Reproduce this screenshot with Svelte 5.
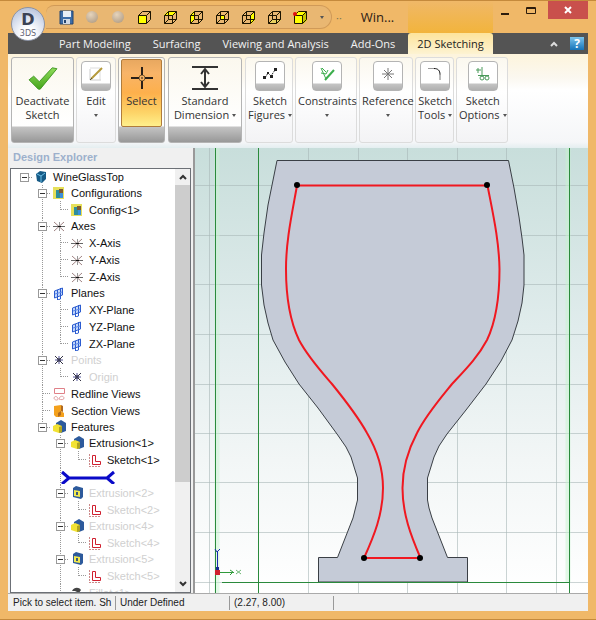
<script lang="ts">
	type Node = {
		label: string;
		icon: string;
		muted?: boolean;
		children?: Node[];
	};

	const views = ['front', 'top', 'left', 'back', 'right', 'bottom', 'iso'];
	const tabs = ['Part Modeling', 'Surfacing', 'Viewing and Analysis', 'Add-Ons', '2D Sketching'];

	const groups = [
		{ id: 'deactivate', lines: ['Deactivate', 'Sketch'], large: true, width: 63 },
		{ id: 'edit', lines: ['Edit'], menu: true, width: 40 },
		{ id: 'select', lines: ['Select'], large: true, width: 47 },
		{ id: 'dimension', lines: ['Standard', 'Dimension'], large: true, menu: true, width: 74 },
		{ id: 'figures', lines: ['Sketch', 'Figures'], menu: true, width: 48 },
		{ id: 'constraints', lines: ['Constraints'], menu: true, width: 62 },
		{ id: 'reference', lines: ['Reference'], menu: true, width: 54 },
		{ id: 'tools', lines: ['Sketch', 'Tools'], menu: true, width: 39 },
		{ id: 'options', lines: ['Sketch', 'Options'], menu: true, width: 52 }
	];

	const extrusion = (n: number, icon: string, muted = true): Node => ({
		label: `Extrusion<${n}>`,
		icon,
		muted,
		children: [{ label: `Sketch<${n}>`, icon: 'sketch', muted }]
	});

	const root: Node = {
		label: 'WineGlassTop',
		icon: 'part',
		children: [
			{ label: 'Configurations', icon: 'config', children: [{ label: 'Config<1>', icon: 'config' }] },
			{
				label: 'Axes',
				icon: 'axis',
				children: ['X-Axis', 'Y-Axis', 'Z-Axis'].map((label) => ({ label, icon: 'axis' }))
			},
			{
				label: 'Planes',
				icon: 'plane',
				children: ['XY-Plane', 'YZ-Plane', 'ZX-Plane'].map((label) => ({ label, icon: 'plane' }))
			},
			{
				label: 'Points',
				icon: 'point',
				muted: true,
				children: [{ label: 'Origin', icon: 'point', muted: true }]
			},
			{ label: 'Redline Views', icon: 'redline' },
			{ label: 'Section Views', icon: 'section' },
			{
				label: 'Features',
				icon: 'boss',
				children: [
					extrusion(1, 'boss', false),
					{ label: '', icon: 'rollback' },
					extrusion(2, 'cut'),
					extrusion(4, 'boss'),
					extrusion(5, 'cut'),
					{ label: 'Fillet<1>', icon: 'fillet', muted: true }
				]
			}
		]
	};

	const gridX = [209, 308, 358, 407, 457, 506, 556];
	const gridY = [185, 235, 284, 334, 384, 433, 482, 532, 582];
	const handles = [
		[297, 185],
		[487, 185],
		[364, 558],
		[420, 558]
	];

	let activeTab = $state('2D Sketching');
	let activeTool = $state('select');
	let closed: Record<string, boolean> = $state({});
</script>

{#snippet cube(face: string)}
	<svg class="cube" viewBox="0 0 15 15" aria-hidden="true">
		{#if face === 'iso'}
			<path d="M1 5 5 1h9v9l-4 4H1z" fill="#ff0" />
			<path d="M10 5l4-4v9l-4 4z" fill="#c8c800" />
			<path d="M1.5 5.5h8v8h-8zM1.5 5.5l4-4h8l-4 4M13.5 1.5v8l-4 4" />
			<circle cx="2" cy="4" r="2" fill="#e01010" />
		{:else}
			{#if face === 'front'}<path d="M1 5h9v9H1z" fill="#ff0" />{/if}
			{#if face === 'back'}<path d="M5 5h5v5H5z" fill="#ff0" />{/if}
			{#if face === 'left'}<path d="M1 5l4-4v9l-4 4z" fill="#ff0" />{/if}
			{#if face === 'right'}<path d="M10 5l4-4v9l-4 4z" fill="#ff0" />{/if}
			{#if face === 'top'}<path d="M1 5l4-4h9l-4 4z" fill="#ff0" />{/if}
			{#if face === 'bottom'}<path d="M1 14l4-4h9l-4 4z" fill="#e8d060" />{/if}
			<path d="M1.5 5.5h8v8h-8zM1.5 5.5l4-4h8l-4 4M13.5 1.5v8l-4 4" />
			{#if face !== 'front'}<path d="M5.5 1.5v8h8M5.5 9.5l-4 4" />{/if}
		{/if}
	</svg>
{/snippet}

{#snippet toolIcon(id: string)}
	{#if id === 'deactivate'}
		<svg viewBox="0 0 32 28" width="30" height="26" aria-hidden="true">
			<defs>
				<linearGradient id="tick" x1="0" y1="0" x2="0" y2="1">
					<stop offset="0" stop-color="#8fdc5a" />
					<stop offset="1" stop-color="#45a51c" />
				</linearGradient>
			</defs>
			<path d="M1 16l5-4 6 6L26 3l5 1-18 22h-2z" fill="url(#tick)" stroke="#3d9420" />
		</svg>
	{:else if id === 'select'}
		<svg viewBox="0 0 24 24" width="24" height="24" aria-hidden="true">
			<circle cx="12" cy="12" r="3" fill="none" stroke="#7a5a30" />
			<path d="M12 1v8M12 15v8M1 12h8M15 12h8" stroke="#2a2018" stroke-width="2" />
			<path d="M11 12h2" stroke="#2a2018" />
		</svg>
	{:else if id === 'dimension'}
		<svg viewBox="0 0 26 26" width="26" height="26" fill="none" stroke="#333" aria-hidden="true">
			<path d="M0 2h26M0 24h26" stroke-width="2" />
			<path d="M13 4v18M9 9l4-5 4 5M9 17l4 5 4-5" stroke-width="2" />
		</svg>
	{:else if id === 'edit'}
		<svg viewBox="0 0 16 16" width="16" height="16" fill="none" aria-hidden="true">
			<path d="M2 3v11h11" stroke="#ccc" />
			<path d="M2 2h10v12" stroke="#dcdcdc" />
			<path d="M3 13 14 2" stroke="#b59a3c" stroke-width="2" />
			<path d="M2 14l2-2" stroke="#554" />
		</svg>
	{:else if id === 'figures'}
		<svg viewBox="0 0 16 16" width="16" height="16" fill="#222" aria-hidden="true">
			<path d="M3 12l3-5 3 3 4-6" fill="none" stroke="#222" stroke-dasharray="2 1" />
			<path d="M1 10h3v3H1zM5 6h2v2H5zM8 9h3v3H8zM12 2h3v3h-3z" />
		</svg>
	{:else if id === 'constraints'}
		<svg viewBox="0 0 16 16" width="16" height="16" fill="none" stroke="#3cae4c" aria-hidden="true">
			<path d="M2 2l5 11M2 7l5 1 2-4M3 2l4 4" />
			<path d="M6 14 15 4" stroke-width="2" />
		</svg>
	{:else if id === 'reference'}
		<svg viewBox="0 0 16 16" width="16" height="16" fill="none" stroke="#777" aria-hidden="true">
			<path d="M8 2v12M2 8h12M4 4l8 8M12 4l-8 8" />
		</svg>
	{:else if id === 'tools'}
		<svg viewBox="0 0 16 16" width="16" height="16" fill="none" aria-hidden="true">
			<path d="M1 2.500h6" stroke="#999" />
			<path d="M7 2.500c4 0 6 2 6 6" stroke="#111" />
			<path d="M13 8v6" stroke="#777" />
		</svg>
	{:else}
		<svg viewBox="0 0 16 16" width="16" height="16" fill="none" stroke="#4a9a5a" aria-hidden="true">
			<path d="M1 4h5M3 2v5M7 1v10M3 9.500h11" />
			<circle cx="7" cy="12" r="2" />
			<circle cx="12" cy="12" r="2" />
		</svg>
	{/if}
{/snippet}

{#snippet treeIcon(icon: string)}
	<svg class="node-icon" viewBox="0 0 14 14" fill="none" aria-hidden="true">
		{#if icon === 'part'}
			<path d="M2 4l4-3 6 1v7l-4 4-5-2z" fill="#155a86" />
			<path d="M3 4l4 2v6M7 6l4-3" stroke="#6cc0e8" />
		{:else if icon === 'config'}
			<path d="M1 1h11v12H1z" fill="#e6e05a" />
			<path d="M4 4h4v8H4z" fill="#2f8d9c" />
			<path d="M7 3h4v4H7z" fill="#7d5a32" />
			<path d="M8 7h3v5H8z" fill="#3a8fdc" />
		{:else if icon === 'axis'}
			<path d="M2 3l10 9M2 12l10-9" stroke="#a08484" />
			<path d="M1 7.500h12" stroke="#666" />
			<path d="M7.500 3v9" stroke="#999" />
			<path d="M6 7h3v1H6z" fill="#111" />
		{:else if icon === 'plane'}
			<path d="M2.500 5l8-3v7l-8 3z" fill="#c4d8fa" stroke="#2b5cd0" />
			<path d="M5.500 4v10l3-1V2" stroke="#2b5cd0" />
			<path d="M3 8l7-2" stroke="#5a86e8" />
		{:else if icon === 'point'}
			<path d="M3 3l8 8M11 3l-8 8" stroke="#334" />
			<path d="M7 3v8M3 7h8" stroke="#559" />
			<path d="M5 5h4v4H5z" fill="#334" fill-opacity="0.6" />
		{:else if icon === 'redline'}
			<path d="M2.500 1.500h10v5h-10z" stroke="#e08088" />
			<path d="M2 11c1-3 4-1 4 1s-4 1-4-1zM7 12c1-4 5-3 5-1s-3 2-5 1z" stroke="#e0a0a4" />
		{:else if icon === 'section'}
			<path d="M2 2l7-1v6l3 2v4H4l-2-2z" fill="#f4a11c" />
			<path d="M9 1l2 1v6l-2-1zM6 9l3-2v4l-3 2z" fill="#b06a20" />
		{:else if icon === 'boss'}
			<path d="M4 3l5-3 5 3v8l-5 2-5-3z" fill="#2d5a9c" />
			<path d="M1 6l4-2 5 2v6l-3 1-6-2z" fill="#f2e233" />
			<path d="M7 7l3-1v6l-3 1z" fill="#b0a420" />
		{:else if icon === 'cut'}
			<path d="M3 2l3-2 7 2v9l-2 2-8-2z" fill="#2d5a9c" />
			<path d="M4 4l6 1v6l-6-1z" fill="#f2e94e" />
			<path d="M6 6h2v3H6z" fill="#3a5a78" />
		{:else if icon === 'sketch'}
			<path d="M1.500 1v12M1 13.500h12" stroke="#c88" stroke-dasharray="2 1" />
			<path d="M4.500 2.500h3v6h5v3h-8z" stroke="#d02030" />
		{:else}
			<path d="M2 5c2-4 7-4 9-1l-2 3-4-2z" fill="#444" />
		{/if}
	</svg>
{/snippet}

{#snippet branch(node: Node)}
	<li>
		{#if node.icon === 'rollback'}
			<div class="row">
				<svg class="rollback" viewBox="0 0 54 14" fill="none" stroke="#0a0ac8" aria-hidden="true">
					<path d="M8 8h38M1 2l7 6-7 6M53 2l-7 6 7 6" stroke-width="3" />
				</svg>
			</div>
		{:else}
			<div class="row" class:muted={node.muted} class:parent={node.children}>
				<span class="branch-slot">
					{#if node.children}
						<button
							class="toggle"
							aria-label={`Toggle ${node.label}`}
							onclick={() => (closed[node.label] = !closed[node.label])}
							><svg viewBox="0 0 7 7" stroke="#333"
								><path d={closed[node.label] ? 'M1 3.500h5M3.500 1v5' : 'M1 3.500h5'} /></svg
							></button
						>
					{/if}
				</span>
				{@render treeIcon(node.icon)}
				<span class="label">{node.label}</span>
			</div>
			{#if node.children && !closed[node.label]}
				<ul>
					{#each node.children as child}
						{@render branch(child)}
					{/each}
				</ul>
			{/if}
		{/if}
	</li>
{/snippet}

<div class="window">
	<header class="titlebar">
		<button class="orb" aria-label="Application menu">
			<b>D</b>
			<small>3DS</small>
		</button>
		<div class="quick">
			<button aria-label="Save">
				<svg viewBox="0 0 15 15" width="15" height="15" aria-hidden="true">
					<path d="M1 1h13v13H1z" fill="#3d6da8" stroke="#25456f" />
					<path d="M4 1h8v6H4z" fill="#e8eef6" />
					<path d="M4 9h7v5H4z" fill="#cfd8e4" />
					<path d="M5 10h2v3H5z" fill="#25456f" />
				</svg>
			</button>
			<button aria-label="Undo"><span class="ball"></span></button>
			<button aria-label="Redo"><span class="ball"></span></button>
			{#each views as view}
				<button aria-label={`${view} view`}>{@render cube(view)}</button>
			{/each}
			<button class="more" aria-label="More views"><span class="caret"></span></button>
		</div>
		<span class="dots">··</span>
		<h1>Win...</h1>
		<div class="controls">
			<button aria-label="Minimize"><svg viewBox="0 0 12 12" width="12" height="12"><path d="M2 9h8v2H2z" fill="#2c1c0c" /></svg></button>
			<button aria-label="Maximize"
				><svg viewBox="0 0 12 12" width="12" height="12" fill="none" stroke="#2c1c0c"><path d="M1.500 3.500h9v6h-9zM1 4.500h10" /></svg></button
			>
			<button class="close" aria-label="Close"
				><svg viewBox="0 0 12 12" width="12" height="12" stroke="#fff" stroke-width="2"><path d="M3 3l6 6M9 3l-6 6" /></svg></button
			>
		</div>
	</header>

	<nav class="tabs">
		{#each tabs as tab}
			<button class:active={activeTab === tab} onclick={() => (activeTab = tab)}>{tab}</button>
		{/each}
		<span class="spacer"></span>
		<button class="collapse" aria-label="Collapse ribbon"
			><svg viewBox="0 0 8 6" width="8" height="6" fill="none" stroke="#ddd" stroke-width="2"><path d="M1 5l3-3 3 3" /></svg></button
		>
		<button class="help" aria-label="Help">?</button>
	</nav>

	<div class="ribbon">
		{#each groups as group}
			<button
				class="group"
				class:large={group.large}
				class:pressed={activeTool === group.id && group.large}
				style:width={`${group.width}px`}
				onclick={() => (activeTool = group.id)}
			>
				<span class="face">
					<span class="glyph">{@render toolIcon(group.id)}</span>
					<span class="caption">
						{#each group.lines as line, i}
							<span class="line"
								>{line}{#if group.menu && i === 1}<i class="caret"></i>{/if}</span
							>
						{/each}
						{#if group.menu && group.lines.length === 1}<span class="line"><i class="caret"></i></span>{/if}
					</span>
				</span>
			</button>
		{/each}
	</div>

	<main>
		<aside>
			<h2>Design Explorer</h2>
			<div class="panel">
				<ul class="tree">
					{@render branch(root)}
				</ul>
				<div class="scrollbar">
					<button aria-label="Scroll up"
						><svg viewBox="0 0 8 6" width="8" height="6" fill="none" stroke="#333" stroke-width="2"><path d="M1 5l3-3 3 3" /></svg></button
					>
					<div class="track"><div class="thumb"></div></div>
					<button aria-label="Scroll down"
						><svg viewBox="0 0 8 6" width="8" height="6" fill="none" stroke="#333" stroke-width="2"><path d="M1 1l3 3 3-3" /></svg></button
					>
				</div>
			</div>
		</aside>

		<div class="viewport">
			<svg viewBox="195 148 393 445" preserveAspectRatio="xMidYMid slice" role="img" aria-label="Wine glass sketch">
				<g stroke="#a9b8b8" stroke-opacity="0.6">
					{#each gridX as x}<path d={`M${x}.500 148v445`} />{/each}
					{#each gridY as y}<path d={`M195 ${y}.500h393`} />{/each}
				</g>
				<g stroke="#c8f4d0" stroke-width="5" stroke-opacity="0.5">
					<path d="M217 148v445M568 148v434" />
				</g>
				<g stroke="#2a8a3c">
					<path d="M215.500 148v445M258.500 148v445M569.500 148v445" />
				</g>
				<path
					d="M277 160.500H508.500L514 188 519 217 522 238 524 255V285L522 303 518 321 512 340 501 361 486 384 466 410 447 434 439 446 434 457 427.500 478V500L429 508 432 518 447.500 557.500H467.500V582H318.500V557.500H337.500L353 518 355 510 357.500 500V478L351 457 346 447 337 434 318 408 299 384 285 362 273 340 268 323 264 305 261.500 285V255L264 233 268 205z"
					fill="#c5cbd7"
					stroke="#3a3f45"
				/>
				<path d="M222 582.500h348" stroke="#2a8a3c" />
				<path
					d="M297 185.500H487.500C493 214 499 240 499.500 269C499.500 296 497 319 487 340C478 357 465 370 452 384C439 400 426 415 417 433C408 450 402.500 470 402.500 488C402.500 514 411 536 420.500 558H364C374 536 383 514 383 488C383 470 377 450 367 433C357 415 345 400 332 384C320 370 308 357 299 340C289 319 286 296 286 269C286 240 292 214 297 185.500z"
					fill="none"
					stroke="#f01820"
					stroke-width="2"
				/>
				{#each handles as [x, y]}
					<circle cx={x} cy={y} r="3" />
				{/each}
				<g fill="none">
					<path d="M217.500 570v-14" stroke="#1a2ab0" />
					<path d="M215 549l2 3 3-3M217.500 552v4" stroke="#1a2ab0" />
					<path d="M216 567h3v3h-3z" fill="#1a2a90" />
					<path d="M220 572.500h14M230 570l3 2-3 3" stroke="#2f9a3a" />
					<path d="M236 570l5 4M241 570l-5 4" stroke="#6cb874" />
					<path d="M215 570h5v5h-5z" fill="#d02030" />
				</g>
			</svg>
		</div>
	</main>

	<footer>
		<span class="hint">Pick to select item. Sh</span>
		<span class="state">Under Defined</span>
		<span class="coords">(2.27, 8.00)</span>
	</footer>
</div>

<style>
	:global(body) {
		margin: 0;
	}

	* {
		box-sizing: border-box;
	}

	button {
		margin: 0;
		padding: 0;
		border: 0;
		background: none;
		font: inherit;
		color: inherit;
	}

	svg {
		display: block;
	}

	ul {
		margin: 0;
		padding: 0;
		list-style: none;
	}

	.window {
		display: flex;
		flex-direction: column;
		height: 100vh;
		padding: 0 8px 8px;
		background: #f0b868;
		border: solid #c58a3c;
		border-width: 1px 0 1px 0;
		font-family: 'Open Sans', 'Noto Sans', sans-serif;
		font-size: 11px;
		color: #333;
		overflow: hidden;
	}

	.titlebar {
		position: relative;
		display: flex;
		align-items: center;
		height: 32px;
		flex: none;
	}

	.orb {
		position: absolute;
		left: 3px;
		top: 6px;
		z-index: 1;
		width: 34px;
		height: 34px;
		border: 1px solid #8c93a4;
		border-radius: 50%;
		background: radial-gradient(circle at 50% 80%, #fff 20%, #d4dcec 60%, #a9b6d2);
		color: #3b4254;
	}

	.orb b,
	.orb small {
		display: block;
		font-family: 'DejaVu Sans', sans-serif;
	}

	.orb b {
		font-size: 16px;
		line-height: 19px;
	}

	.orb small {
		font-size: 8px;
		line-height: 10px;
		color: #667;
	}

	.quick {
		display: flex;
		align-items: center;
		height: 24px;
		margin-left: 38px;
		padding-left: 7px;
		border: 1px solid #d09a58;
		border-left: 0;
		border-radius: 8px 12px 12px 0;
		background: #e9b772;
	}

	.quick button {
		display: grid;
		place-items: center;
		width: 26px;
		height: 22px;
	}

	.quick .more {
		width: 18px;
	}

	.cube {
		width: 15px;
		height: 15px;
		fill: none;
		stroke: #1c1400;
	}

	.cube [fill] {
		stroke: none;
	}

	.ball {
		width: 12px;
		height: 12px;
		border-radius: 50%;
		background: radial-gradient(circle at 40% 30%, #e6d4bc, #a8947c);
	}

	.caret {
		display: inline-block;
		border: 2px solid transparent;
		border-top: 3px solid #555;
		border-bottom: 0;
	}

	.dots {
		margin-left: 4px;
		color: #775;
	}

	h1 {
		flex: 1;
		margin: 0 0 0 19px;
		font-size: 13px;
		font-weight: 400;
		line-height: 20px;
		color: #2c2014;
	}

	.controls {
		display: flex;
		align-self: flex-start;
	}

	.controls button {
		display: grid;
		place-items: center;
		width: 26px;
		height: 18px;
	}

	.controls .close {
		width: 40px;
		margin-left: 4px;
		background: #c9504c;
	}

	.tabs {
		display: flex;
		align-items: stretch;
		flex: none;
		height: 21px;
		padding: 0 4px 0 40px;
		background: #545454;
		color: #f2f2f2;
	}

	.tabs button {
		padding: 0 11px;
		white-space: nowrap;
	}

	.tabs .active {
		position: relative;
		margin-left: 2px;
		padding: 0 9px;
		border-radius: 3px 3px 0 0;
		background: linear-gradient(#fde49c, #fdf3d2);
		color: #222;
	}

	/* contextual tab glow that reaches up into the title bar */
	.tabs .active::before {
		content: '';
		position: absolute;
		left: 0;
		right: 0;
		bottom: 100%;
		height: 32px;
		background: linear-gradient(#f0b868, #f2b43c);
	}

	.spacer {
		flex: 1;
	}

	.tabs .collapse {
		padding: 0;
		margin-right: 12px;
	}

	.tabs .help {
		align-self: center;
		width: 14px;
		height: 13px;
		padding: 0;
		background: linear-gradient(#7cc4ec, #1673b8);
		color: #fff;
		font-size: 12px;
		font-weight: 700;
		line-height: 12px;
	}

	.ribbon {
		display: flex;
		flex: none;
		gap: 2px;
		height: 94px;
		padding: 3px 3px 5px;
		background: linear-gradient(#fdf4dc, #fbf8f0 24px, #fff 36px, #f5f6f8 88px, #e4eef0);
	}

	.group {
		flex: none;
		display: flex;
		border: 1px solid #dcdcdc;
		border-radius: 3px;
		background: linear-gradient(#fbf8ee, #fff 40%, #f3f3f5);
		line-height: 14px;
	}

	.group.large {
		border-color: #b4b4b4;
		background: linear-gradient(#fbf8ee, #fff 68px, #c4c4c4 69px, #989898);
	}

	.group.large:nth-child(n + 3) {
		margin-right: 1px;
	}

	.face {
		display: block;
		flex: 1;
		height: 68px;
		margin: 1px;
		padding-top: 1px;
		border: 1px solid transparent;
	}

	.pressed .face {
		margin: 1px 2px;
		border-color: #b07c3c;
		border-radius: 2px;
		background: linear-gradient(#e8a860, #f8b468 20%, #fdb04c 50%, #fdd468 80%, #fff08c);
	}

	.glyph {
		display: grid;
		place-items: center;
		height: 30px;
		margin: 0 auto;
		padding-top: 3px;
	}

	.group:not(.large) .glyph {
		width: 30px;
		padding: 0 0 5px;
		border: 1px solid #b4b4b4;
		border-radius: 4px;
		background: linear-gradient(#fff 21px, #c4c4c4 22px, #b0b0b0);
	}

	.caption {
		display: block;
		padding-top: 3px;
		white-space: nowrap;
	}

	.line {
		display: flex;
		align-items: center;
		justify-content: center;
		gap: 3px;
		height: 14px;
	}

	main {
		display: grid;
		grid-template-columns: 187px 1fr;
		flex: 1;
		min-height: 0;
	}

	aside {
		display: flex;
		flex-direction: column;
		min-height: 0;
		padding: 0 2px 0 2px;
		background: #f0f0f0;
		border-right: 2px solid #999;
		font-family: 'Liberation Sans', Arial, sans-serif;
	}

	h2 {
		margin: 0;
		padding-left: 3px;
		font-size: 11px;
		line-height: 18px;
		height: 20px;
		color: #9db0cc;
	}

	.panel {
		display: flex;
		flex: 1;
		min-height: 0;
		border: 1px solid #6c7076;
		background: #fff;
	}

	.tree {
		flex: 1;
		padding-left: 5px;
		overflow: hidden;
		color: #111;
	}

	.tree ul {
		margin-left: 18px;
	}

	.tree li {
		position: relative;
	}

	.tree li li::before {
		content: '';
		position: absolute;
		left: 8px;
		top: 0;
		bottom: 0;
		border-left: 1px dotted #999;
	}

	.tree li li:last-child::before {
		bottom: auto;
		height: 9px;
	}

	.row {
		display: flex;
		align-items: center;
		height: 17px;
		line-height: 14px;
	}

	.parent {
		height: 16px;
	}

	.branch-slot {
		position: relative;
		display: flex;
		align-items: center;
		width: 18px;
		height: 100%;
		padding-left: 4px;
	}

	.branch-slot::before {
		content: '';
		position: absolute;
		left: 9px;
		right: 2px;
		top: 8px;
		border-top: 1px dotted #999;
	}

	.toggle {
		position: relative;
		width: 9px;
		height: 9px;
		border: 1px solid #999;
		background: #fff;
	}

	.node-icon {
		width: 14px;
		height: 14px;
	}

	.label {
		padding-left: 5px;
		white-space: nowrap;
	}

	.muted .label {
		color: #d0d0d0;
	}

	.rollback {
		position: relative;
		width: 54px;
		height: 14px;
		margin-left: 9px;
	}

	.scrollbar {
		display: flex;
		flex-direction: column;
		width: 15px;
		background: #f0f0f0;
	}

	.scrollbar button {
		display: grid;
		place-items: center;
		height: 16px;
	}

	.track {
		flex: 1;
	}

	.thumb {
		height: 76%;
		background: #cdcdcd;
	}

	.viewport {
		min-height: 0;
		background: linear-gradient(#c8dedb, #e0ecec 40%, #f2f6f6 70%, #fff);
	}

	.viewport svg {
		width: 100%;
		height: 100%;
	}

	footer {
		display: flex;
		align-items: center;
		flex: none;
		height: 18px;
		padding-left: 5px;
		border-top: 1px solid #aaa;
		background: #f0f0f0;
		font-family: 'Liberation Sans', Arial, sans-serif;
		font-size: 10px;
		color: #222;
	}

	footer span {
		border-right: 1px solid #999;
		line-height: 14px;
		white-space: nowrap;
	}

	.hint {
		width: 103px;
	}

	.state {
		width: 114px;
		padding-left: 4px;
	}

	.coords {
		width: 104px;
		padding-left: 4px;
	}
</style>
